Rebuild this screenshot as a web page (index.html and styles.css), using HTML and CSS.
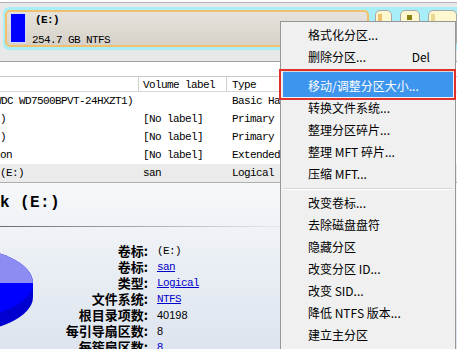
FILE: index.html
```html
<!DOCTYPE html>
<html lang="zh-CN">
<head>
<meta charset="utf-8">
<title>Partition Manager</title>
<link rel="stylesheet" href="styles.css">
</head>
<body>
<div class="app">
  <div class="diskmap">
    <div class="strip">
      <div class="part main">
        <div class="usage"></div>
        <div class="part-text">
          <div class="part-name">(E:)</div>
          <div class="part-size">254.7 GB NTFS</div>
        </div>
      </div>
      <div class="mini m1"><span class="mfill"></span></div>
      <div class="mini m2"><span class="mfill"></span></div>
      <div class="mini m3"><span class="mfill"></span></div>
    </div>
  </div>
  <div class="gap"></div>
  <div class="list">
    <div class="row head">
      <div class="c1"></div>
      <div class="c2">Volume label</div>
      <div class="c3">Type</div>
    </div>
    <div class="row">
      <div class="c1"><span class="n n0">Disk 0 (WDC WD7500BPVT-24HXZT1)</span></div>
      <div class="c2"></div>
      <div class="c3">Basic Hard Disk</div>
    </div>
    <div class="row">
      <div class="c1"><span class="n n1">Local Disk (C:)</span></div>
      <div class="c2">[No label]</div>
      <div class="c3">Primary</div>
    </div>
    <div class="row">
      <div class="c1"><span class="n n1">Local Disk (D:)</span></div>
      <div class="c2">[No label]</div>
      <div class="c3">Primary</div>
    </div>
    <div class="row">
      <div class="c1"><span class="n n2">Extended Partition</span></div>
      <div class="c2">[No label]</div>
      <div class="c3">Extended</div>
    </div>
    <div class="row current">
      <div class="c1"><span class="n n3">Local Disk (E:)</span></div>
      <div class="c2">san</div>
      <div class="c3">Logical</div>
    </div>
  </div>
  <div class="details">
    <div class="title">Local Disk (E:)</div>
    <div class="rule"></div>
    <div class="info">
      <svg class="pie" width="40" height="110" viewBox="0 0 40 110">
        <ellipse cx="-45" cy="70" rx="78" ry="36" fill="#0000d0"/>
        <rect x="-123" y="56" width="156" height="14" fill="#0000d0"/>
        <ellipse cx="-45" cy="56" rx="78" ry="36" fill="#0000ff"/>
        <path d="M -123 56 A 78 36 0 0 1 33 56 Z" fill="#8c8cf2"/>
      </svg>
      <div class="props">
        <div class="k">卷标:</div><div class="v mono">(E:)</div>
        <div class="k">卷标:</div><div class="v mono"><a href="#">san</a></div>
        <div class="k">类型:</div><div class="v mono"><a href="#">Logical</a></div>
        <div class="k">文件系统:</div><div class="v mono"><a href="#">NTFS</a></div>
        <div class="k">根目录项数:</div><div class="v num">40198</div>
        <div class="k">每引导扇区数:</div><div class="v num">8</div>
        <div class="k">每簇扇区数:</div><div class="v num"><a href="#">8</a></div>
      </div>
    </div>
  </div>

  <div class="menu">
    <div class="item">格式化分区...</div>
    <div class="item"><span>删除分区...</span><span class="key">Del</span></div>
    <div class="sep"></div>
    <div class="item sel">移动/调整分区大小...</div>
    <div class="item">转换文件系统...</div>
    <div class="item">整理分区碎片...</div>
    <div class="item">整理 MFT 碎片...</div>
    <div class="item">压缩 MFT...</div>
    <div class="sep"></div>
    <div class="item">改变卷标...</div>
    <div class="item">去除磁盘盘符</div>
    <div class="item">隐藏分区</div>
    <div class="item">改变分区 ID...</div>
    <div class="item">改变 SID...</div>
    <div class="item">降低 NTFS 版本...</div>
    <div class="item">建立主分区</div>
  </div>
  <div class="mark"></div>
</div>
</body>
</html>
```
FILE: styles.css
```css
* { box-sizing: border-box; margin: 0; padding: 0; }
html, body { width: 457px; height: 349px; overflow: hidden; background: #fff; }
body { font-family: "Liberation Mono", monospace; font-size: 11px; color: #000; }
.app { position: relative; width: 457px; height: 349px; overflow: hidden; }

/* disk map */
.diskmap {
  margin-top: 2px; height: 60px;
  border-top: 1px solid #b4b4b4; border-bottom: 1px solid #a0a0a0;
  background: #e8e8e8; padding: 4px 0 0 3px;
}
.strip {
  height: 43px; background: #a8eef8; border-radius: 6px 0 0 6px;
  display: flex; align-items: flex-start; padding: 3px 0 0 2px;
}
.part.main {
  width: 373px; height: 37px; border: 2px solid #f2c06c; border-radius: 5px;
  background: linear-gradient(#e6e3dc, #d6d2c9);
  display: flex; padding: 1px 3px;
}
.usage { width: 16px; height: 30px; background: #0000ff; border: 1px solid #d8d8f8; }
.part-text { margin-left: 6px; letter-spacing: -0.6px; }
.part-name { font-weight: bold; line-height: 12px; margin-top: 1px; padding-left: 3px; }
.part-size { line-height: 12px; margin-top: 8px; }
.mini {
  height: 37px; border: 1px solid #a8a8a8; border-radius: 5px;
  background: #fdf8d0; position: relative; margin-left: 8px;
}
.m1 { width: 17px; margin-left: 6px; }
.m2 { width: 20px; }
.m3 { width: 30px; }
.mfill { display: block; }
.m1 .mfill { width: 4px; height: 9px; margin: 3px 0 0 2px; background: #f0c070; }
.m2 .mfill { width: 5px; height: 5px; margin: 4px 0 0 6px; background: #8c8010; }
.m3 .mfill { width: 4px; height: 9px; margin: 3px 0 0 2px; background: #e8d890; }

.gap { height: 14px; background: #fff; }

/* list */
.list { letter-spacing: -0.6px; }
.row { display: grid; grid-template-columns: 138px 88px 1fr; height: 18px; line-height: 18px; white-space: nowrap; }
.row > div { overflow: hidden; }
.row.head { height: 16px; line-height: 17px; border-top: 1px solid #c8c8c8; border-bottom: 1px solid #d8d8d8; }
.row.head .c2, .row.head .c3 { border-left: 1px solid #d0d0d0; }
.c2 { padding-left: 5px; }
.c3 { padding-left: 6px; }
.row.head .c2 { padding-left: 4px; }
.row.head .c3 { padding-left: 5px; }
.row.current { background: #ebebeb; }
.n { display: inline-block; }
.n0 { margin-left: -53px; }
.n1 { margin-left: -84px; }
.n2 { margin-left: -96px; }
.n3 { margin-left: -66px; }

/* details */
.details {
  border-top: 1px solid #b0b0b0; height: 170px;
  background: linear-gradient(#f6f8fa, #dde4ee);
}
.title {
  font-weight: bold; font-size: 16px; letter-spacing: 0.4px; line-height: 20px;
  margin-top: 10px; text-indent: -90px; white-space: nowrap;
}
.rule { height: 1px; margin-top: 13px; width: 280px; background: linear-gradient(to right, #6c6c6c, #e6eaf0); }
.info { display: flex; }
.pie { display: block; flex: none; }
.props {
  display: grid; grid-template-columns: 108px auto; column-gap: 9px;
  padding-top: 16px; line-height: 16px;
}
.k { font-family: "Noto Sans CJK SC", sans-serif; font-weight: bold; font-size: 13px; line-height: 16px; height: 16px; text-align: right; }
.v { font-size: 11px; height: 16px; }
.v.mono { letter-spacing: -0.6px; }
.v.num { font-family: "Liberation Sans", sans-serif; }
.v a { color: #0000cc; text-decoration: underline; }

/* context menu */
.menu {
  position: absolute; left: 280px; top: 21px; width: 176px; height: 340px;
  background: #f0f0f0; border: 1px solid #979797; padding: 2px;
  font-family: "Noto Sans CJK SC", sans-serif; font-size: 12px; color: #000;
}
.item { height: 22px; line-height: 22px; padding-left: 25px; padding-right: 23px; display: flex; justify-content: space-between; white-space: nowrap; }
.item.sel { background: #3d95ee; color: #fff; box-shadow: 0 -3px 0 #3d95ee; }
.sep { height: 7px; padding-top: 3px; }
.sep::before { content: ""; display: block; height: 1px; background: #d7d7d7; border-bottom: 1px solid #fff; box-sizing: content-box; }
.mark {
  position: absolute; left: 279px; top: 69px; width: 177px; height: 31px;
  border: 2px solid #e0302c;
}
```
